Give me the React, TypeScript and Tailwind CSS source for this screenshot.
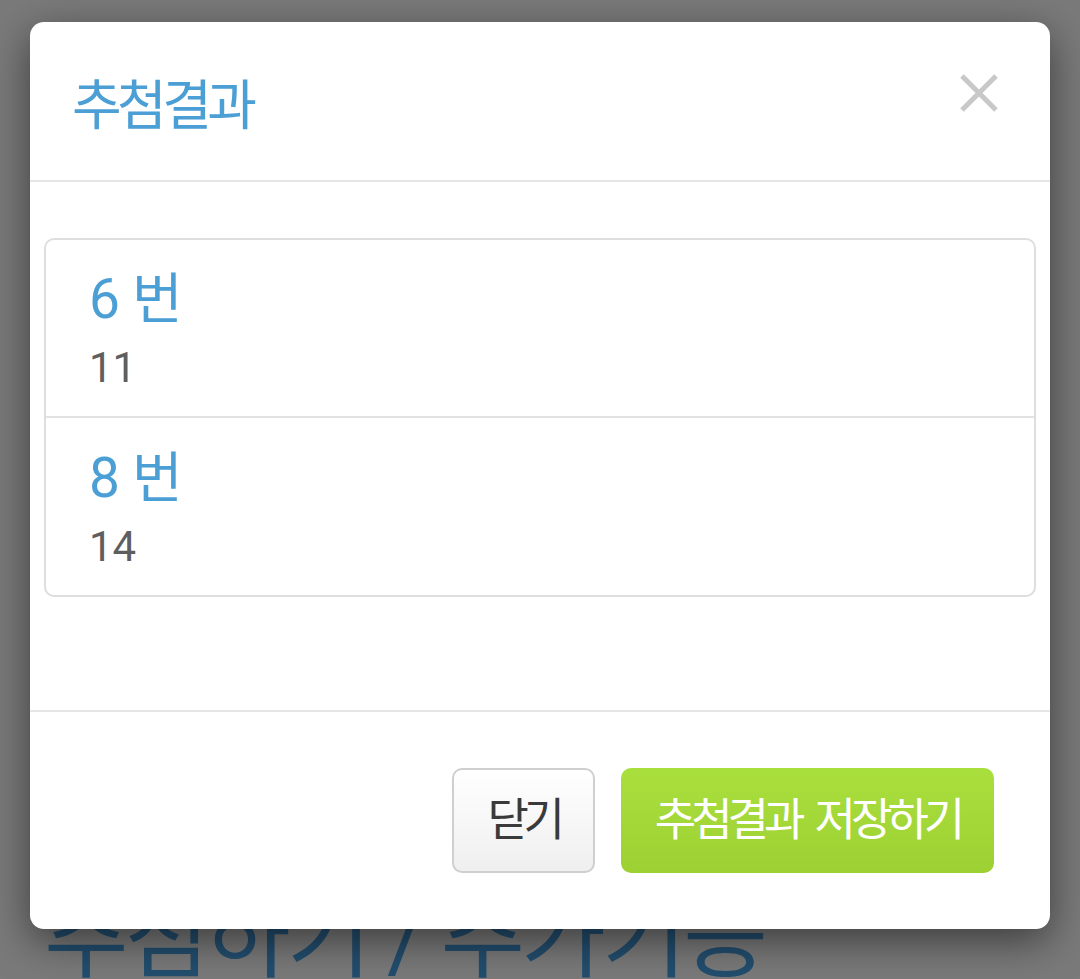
import React from "react";

const FONT = "font-['Roboto','Noto_Sans_CJK_KR',sans-serif]";

function CloseIcon() {
  return (
    <svg width="40" height="40" viewBox="0 0 40 40" aria-hidden="true">
      <path d="M3 3 L37 37 M37 3 L3 37" stroke="#c8c8c8" strokeWidth="5" strokeLinecap="butt" />
    </svg>
  );
}

function Item({ num, count, last }: { num: number; count: number; last?: boolean }) {
  return (
    <div className={`${last ? "h-[177px] pt-[24px]" : "h-[178px] pt-[23px] border-b-2 border-[#e2e2e2]"} pl-[43px]`}>
      <div className="text-[55px] leading-[72px] text-[#4b9fd5]">
        {num}
        <span className="ml-[12px]">번</span>
      </div>
      <div className="text-[42px] leading-[56px] text-[#5f5f5f] mt-[5px]">{count}</div>
    </div>
  );
}

export default function App() {
  return (
    <div className={`relative h-[979px] w-[1080px] overflow-hidden bg-white ${FONT}`}>
      {/* page content behind the overlay */}
      <div className="pt-[884px] pl-[44px]">
        <h1 className="text-[92px] leading-[110px] text-[#4aa4e8] tracking-[-0.04em] whitespace-nowrap">
          추첨하기 / 추가기능
        </h1>
      </div>

      {/* overlay + modal */}
      <div className="absolute inset-0 bg-black/[0.52] pt-[22px] px-[30px]">
        <div className="bg-white rounded-[14px] shadow-[0_12px_40px_rgba(0,0,0,0.5)] h-[907px] flex flex-col">
          <div className="h-[160px] flex items-center justify-between border-b-2 border-[#e5e5e5] pl-[42px] pr-[51px] shrink-0">
            <h4 className="text-[54px] leading-[64px] text-[#4b9fd5] tracking-[-0.085em] pt-[12px]">추첨결과</h4>
            <button className="mt-[-16px]">
              <CloseIcon />
            </button>
          </div>

          <div className="pt-[56px] px-[14px] pb-[113px] shrink-0">
            <div className="border-2 border-[#dedede] rounded-[10px] overflow-hidden">
              <Item num={6} count={11} />
              <Item num={8} count={14} last />
            </div>
          </div>

          <div className="flex-1 border-t-2 border-[#e5e5e5] flex justify-end items-start gap-[26px] pr-[56px] pt-[56px]">
            <button className="w-[143px] h-[105px] rounded-[10px] border-2 border-[#cfcfcf] bg-gradient-to-b from-white to-[#efefef] text-[#3a3a3a] text-[45px] tracking-[-0.12em] flex items-center justify-center">
              닫기
            </button>
            <button className="w-[373px] h-[105px] rounded-[10px] bg-gradient-to-b from-[#a9df3d] to-[#9dd133] text-white text-[45px] flex items-center justify-center whitespace-pre">
              <span className="tracking-[-0.11em]">추첨결과</span>
              <span className="ml-[14px] tracking-[-0.11em]">저장하기</span>
            </button>
          </div>
        </div>
      </div>
    </div>
  );
}
